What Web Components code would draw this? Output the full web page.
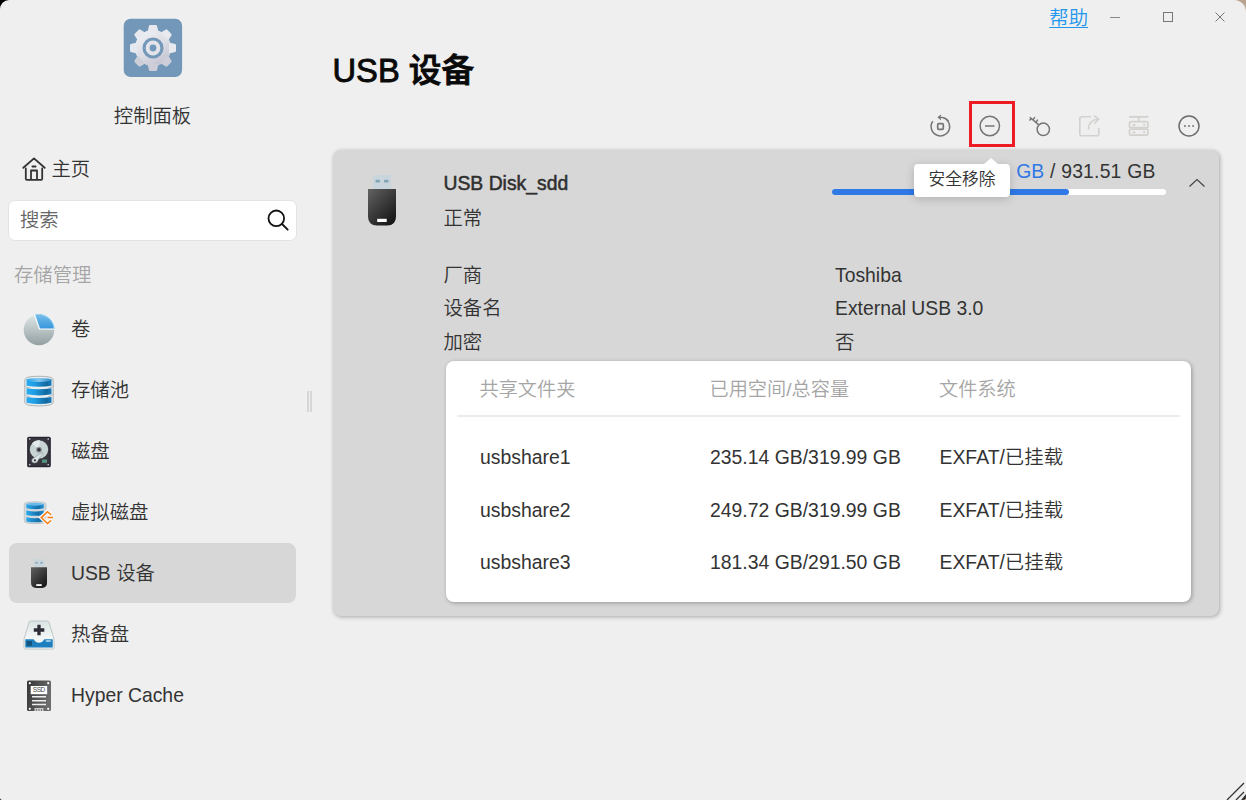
<!DOCTYPE html>
<html lang="zh-CN">
<head>
<meta charset="utf-8">
<title>控制面板</title>
<style>
    html, body {
        margin: 0;
        height: 100%;
        overflow: hidden;
    }
    body {
        background: linear-gradient(90deg, #000 50%, #b9a58f 50%);
        font: 350 19.35px/28px "Liberation Sans", "Noto Sans CJK SC", sans-serif;
        color: #333;
    }
</style>
</head>
<body>
<app-window>
    <side-bar slot="side">
        <nav-item icon="pie">卷</nav-item>
        <nav-item icon="pool">存储池</nav-item>
        <nav-item icon="disk">磁盘</nav-item>
        <nav-item icon="virtual">虚拟磁盘</nav-item>
        <nav-item icon="usb" active>USB 设备</nav-item>
        <nav-item icon="spare">热备盘</nav-item>
        <nav-item icon="ssd">Hyper Cache</nav-item>
    </side-bar>
    <tool-bar slot="tools">
        <tool-button icon="refresh"></tool-button>
        <tool-button icon="minus" marked>安全移除</tool-button>
        <tool-button icon="key"></tool-button>
        <tool-button icon="share"></tool-button>
        <tool-button icon="server"></tool-button>
        <tool-button icon="more"></tool-button>
    </tool-bar>
    <device-card>
        <span slot="name">USB Disk_sdd</span>
        <span slot="status">正常</span>
        <usage-bar slot="usage" percent="71.2"><span slot="used">GB</span> / 931.51 GB</usage-bar>
        <info-row label="厂商">Toshiba</info-row>
        <info-row label="设备名">External USB 3.0</info-row>
        <info-row label="加密">否</info-row>
        <share-table slot="shares"></share-table>
    </device-card>
</app-window>

<script>
const icons = {
    gear: `<svg width="60" height="60" viewBox="0 0 60 60">
        <defs><linearGradient id="g" x1="0" y1="0" x2=".6" y2="1"><stop offset="0" stop-color="#f4f5f8"/><stop offset=".6" stop-color="#dcdde5"/><stop offset="1" stop-color="#c5c6d3"/></linearGradient></defs>
        <rect x=".7" y=".7" width="58.4" height="58.4" rx="7" fill="#7297b8"/>
        <g fill="url(#g)"><circle cx="30" cy="30" r="18"/>
        ${[0, 45, 90, 135, 180, 225, 270, 315].map(a => `<path transform="rotate(${a} 30 30)" fill="${a > 90 && a < 270 ? '#cdced8' : '#e8e9ef'}" d="M24.5 14L26 7.8Q26.3 7 27.2 7h5.6q.9 0 1.2.8L35.500 14z"/>`).join('')}</g>
        <circle cx="30" cy="30" r="10.500" fill="#7297b8"/>
        <circle cx="30" cy="30" r="5.400" fill="none" stroke="#e3e4eb" stroke-width="4"/></svg>`,
    home: `<svg width="26" height="26" viewBox="0 0 26 26" fill="none" stroke="#333" stroke-width="1.8" stroke-linecap="round" stroke-linejoin="round">
        <path d="M2.300 11.800L13 2.400l10.700 9.400M4.800 12.500v10.300q0 1 1 1h14.400q1 0 1-1V12.500M10 23.500v-9h6v9M11.400 10.500h3.200"/></svg>`,
    search: `<svg width="22" height="22" viewBox="0 0 22 22" fill="none" stroke="#111" stroke-width="1.8" stroke-linecap="round">
        <circle cx="9.300" cy="9.300" r="7.800"/><path d="M15 15l5.700 5.700"/></svg>`,
    pie: `<svg width="32" height="32" viewBox="0 0 32 32">
        <defs><linearGradient id="a" x2="0" y2="1"><stop offset="0" stop-color="#dfe7e8"/><stop offset="1" stop-color="#939fa1"/></linearGradient>
        <linearGradient id="b" x2="0" y2="1"><stop offset="0" stop-color="#75bfea"/><stop offset="1" stop-color="#3795dc"/></linearGradient></defs>
        <circle cx="16" cy="16" r="15.300" fill="url(#a)"/>
        <path d="M16.500 15L11.600.9A15.300 15.300 0 0 1 31.400 15z" fill="url(#b)" stroke="#fff" stroke-width="1.200"/>
        <path d="M12 .9A15.200 15.200 0 0 1 31.300 15" fill="none" stroke="#75bde8" stroke-width=".8"/></svg>`,
    pool: `<svg width="32" height="32" viewBox="0 0 32 32">
        <defs><linearGradient id="c"><stop offset="0" stop-color="#2aa9ed"/><stop offset=".3" stop-color="#20a0e8"/><stop offset=".8" stop-color="#12689f"/><stop offset="1" stop-color="#1b7dbd"/></linearGradient>
        <linearGradient id="t"><stop offset="0" stop-color="#2aa2e8"/><stop offset=".5" stop-color="#82c8f0"/><stop offset="1" stop-color="#2c89c6"/></linearGradient></defs>
        <path d="M1.800 5C1.800 2 8 1.300 16 1.300S30.200 2 30.200 5v22c0 3-6 3.900-14.200 3.900S1.800 30 1.800 27z" fill="#e8eef0" stroke="#a6abad" stroke-width=".9"/>
        <g fill="url(#c)"><path d="M3.500 4.500h25v6.200q-12 2.300-25 0z"/><path d="M3.500 13.300q12 2 25 0v6q-12 2.300-25 0z"/><path d="M3.500 22q12 2 25 0v5.700q-12 2.600-25 0z"/></g>
        <ellipse cx="16" cy="4.900" rx="12.500" ry="2" fill="url(#t)"/>
        <path d="M1.800 10.800q1 2 5 2.200M30.200 10.800q-1 2-5 2.200M1.800 19.300q1 2 5 2.200M30.200 19.300q-1 2-5 2.200" fill="none" stroke="#a6abad" stroke-width=".8"/></svg>`,
    disk: `<svg width="32" height="32" viewBox="0 0 32 32">
        <rect x="4.200" y=".7" width="23.500" height="30.500" rx="1.500" fill="#37363f"/>
        <rect x="5" y="1.500" width="22" height="28.900" rx="1" fill="none" stroke="#24232b"/>
        <g fill="#dce2e4"><circle cx="6.700" cy="3" r=".8"/><circle cx="25.200" cy="3" r=".8"/><circle cx="6.700" cy="28.800" r=".8"/><circle cx="25.200" cy="28.800" r=".8"/></g>
        <circle cx="16" cy="13.500" r="9.200" fill="#c8d3d4"/><path d="M16 13.500L9 7.500a9.200 9.200 0 0 1 8-3.100z" fill="#e3eaea"/>
        <circle cx="16" cy="13.700" r="2.900" fill="#8b9698"/><circle cx="16" cy="13.700" r="1.800" fill="#333039"/>
        <path d="M9.800 22.500l6-4 4-1.800.6 1.400-3.700 3.400-2.700 4.700q-3.200 1.800-5-.5-.8-1.700.8-3.200z" fill="#d8e1e2" stroke="#849193" stroke-width=".5"/>
        <circle cx="11.900" cy="24.300" r="1.100" fill="#333039"/><rect x="19" y="23.500" width="5" height="3.300" fill="#569482"/></svg>`,
    virtual: `<svg width="32" height="32" viewBox="0 0 32 32">
        <defs><linearGradient id="c"><stop offset="0" stop-color="#2aa9ed"/><stop offset=".7" stop-color="#166fa9"/><stop offset="1" stop-color="#2791d3"/></linearGradient></defs>
        <path d="M1.300 7Q1.300 4.800 12 4.800T23 7v17q0 2.600-11 2.600T1.300 24z" fill="#d2d9dc" stroke="#b9c0c3" stroke-width=".8"/>
        <g fill="url(#c)"><path d="M3.300 7h17.500v4.300q-8.500 1.700-17.500 0z"/><path d="M3.300 13.600q8.500 1.700 17.500 0V18q-8.500 1.700-17.500 0z"/><path d="M3.300 20.300q8.500 1.700 17.500 0v4.200q-8.500 1.700-17.500 0z"/></g>
        <ellipse cx="12" cy="7.200" rx="8.700" ry="1.500" fill="#66b9e8"/>
        <path d="M28 17.800L24.500 14.800 18.300 20.600l6.200 5.900 3.500-3M23.500 20.600h6.500" fill="none" stroke="#f8f8f8" stroke-width="4"/>
        <path d="M28 17.800L24.500 14.800 18.300 20.600l6.200 5.900 3.500-3M24.500 20.600h5.500" fill="none" stroke="#f67d0c" stroke-width="1.500"/></svg>`,
    usb: `<svg viewBox="0 0 56 56">
        <defs><linearGradient id="u" x1="0" y1="0" x2=".8" y2="1"><stop offset="0" stop-color="#626262"/><stop offset="1" stop-color="#161616"/></linearGradient></defs>
        <rect x="19" y="2" width="18" height="14" fill="#c8d5dc"/>
        <rect x="21.500" y="6.800" width="4.500" height="2.800" rx="1" fill="#82a4b4"/><rect x="30" y="6.800" width="4.500" height="2.800" rx="1" fill="#82a4b4"/>
        <path d="M14 16h28v27.500q0 9-9 9H23q-9 0-9-9z" fill="url(#u)"/><rect x="23.200" y="45.800" width="9.500" height="3.200" fill="#fff"/></svg>`,
    spare: `<svg width="32" height="32" viewBox="0 0 32 32">
        <defs><linearGradient id="w" x2="0" y2="1"><stop offset="0" stop-color="#dbe4e4"/><stop offset=".6" stop-color="#f3f6f6"/></linearGradient></defs>
        <path d="M7.500 2h17q1 0 1.400 1L31 20v8.800q0 1.200-1.200 1.200H2.200Q1 30 1 28.800V20L6.100 3q.4-1 1.400-1z" fill="url(#w)" stroke="#b3bcbd" stroke-width=".8"/>
        <path d="M2.300 20.300h8.300q2.200 3.500 5.400 3.500t5.400-3.500h8.300v8.300H2.300z" fill="#1d7fbd"/>
        <rect x="3.500" y="22" width="5.500" height="4.800" fill="#14557f"/><path d="M22.800 22h5" stroke="#d4eafa" stroke-width="1.300"/>
        <path d="M10.800 11h10.500M16 5.800v10.500" stroke="#2e2d36" stroke-width="3.300"/></svg>`,
    ssd: `<svg width="32" height="32" viewBox="0 0 32 32">
        <defs><linearGradient id="s" x1="0" x2="1" y1="0" y2=".3"><stop offset="0" stop-color="#353535"/><stop offset="1" stop-color="#6c6c6c"/></linearGradient></defs>
        <rect x="4" y=".5" width="24" height="30.500" rx="1.500" fill="url(#s)"/>
        <g fill="#fff"><circle cx="6.800" cy="3.200" r="1.100"/><circle cx="25.200" cy="3.200" r="1.100"/><circle cx="6.800" cy="28.800" r="1.100"/><circle cx="25.200" cy="28.800" r="1.100"/><rect x="7.700" y="6" width="16.500" height="8.200"/></g>
        <text x="16" y="12.400" text-anchor="middle" textLength="12.500" font-family="Liberation Sans" font-size="6.500" font-weight="400" fill="#444">SSD</text>
        <path d="M9 16.800h14M9 20.700h14M9 24.600h14" stroke="#eee" stroke-width="1.500"/><path d="M11.500 28h9v3h-9z" fill="#c9c9c9"/><path d="M13.500 29v2M16 29v2M18.500 29v2" stroke="#666" stroke-width=".8"/></svg>`,
    refresh: `<svg width="24" height="24" viewBox="0 0 24 24" fill="none" stroke="#757575" stroke-width="1.500">
        <path d="M3.800 7.200A9.300 9.300 0 1 0 9.800 3.400" stroke-dasharray="46.500 100"/><path d="M9.600 3.300h2.200a9.300 9.300 0 0 1 7.700 3.700M12 1.200L9.400 3.300 12 5.500" stroke-width="1.300"/>
        <rect x="8.700" y="9.700" width="5.600" height="5.600" rx="1" stroke-width="1.700"/></svg>`,
    minus: `<svg width="24" height="24" viewBox="0 0 24 24" fill="none" stroke="#757575" stroke-width="1.500"><circle cx="11.800" cy="12" r="9.700"/><path d="M7 12h9.600"/></svg>`,
    key: `<svg width="24" height="24" viewBox="0 0 24 24" fill="none" stroke="#757575" stroke-width="1.500">
        <circle cx="15.300" cy="15.300" r="6.200"/><path d="M10.800 10.900L1.800 3.300M7.800 8.200l2-2.600M4.900 5.900l2.100-2.800M1.500 6.500l2-2.300"/></svg>`,
    share: `<svg width="24" height="24" viewBox="0 0 24 24" fill="none" stroke="#d3d1ce" stroke-width="1.600">
        <path d="M13 2.700H3.800q-2 0-2 2v15q0 2 2 2h15q2 0 2-2V14M10.500 15.500Q10.500 6 20 5.200M16 1.700l4.500 3.500-4.200 4.500"/></svg>`,
    server: `<svg width="24" height="24" viewBox="0 0 24 24" fill="none" stroke="#d3d1ce" stroke-width="1.700">
        <path d="M2 2.800h19.500M11.700 2.800v5M5.500 11.200h3M5.500 18.300h3"/><rect x="2.400" y="7.700" width="18.600" height="6" rx="1.500"/><rect x="2.400" y="15.200" width="18.600" height="6" rx="1.500"/><path d="M16.300 10.800h1.800M16.300 18.200h1.800" stroke-width="2"/></svg>`,
    more: `<svg width="24" height="24" viewBox="0 0 24 24" fill="none" stroke="#6c6c6c" stroke-width="1.500"><circle cx="12" cy="12" r="10"/><path d="M7 12h1.800M11.100 12h1.800M15.200 12H17" stroke-width="1.700"/></svg>`,
    chevron: `<svg width="18" height="10" viewBox="0 0 18 10" fill="none" stroke="#444" stroke-width="1.200"><path d="M1.500 8.500L9 1.500l7.500 7"/></svg>`
};

// Shared base: renders the class template into an open shadow root
class BaseElement extends HTMLElement {
    connectedCallback() {
        if (this.shadowRoot) return;
        const template = document.createElement('template');
        template.innerHTML = this.render();
        this.attachShadow({ mode: 'open' }).appendChild(template.content.cloneNode(true));
    }
}

class AppWindow extends BaseElement {
    render() {
        return `
            <style>
                :host {
                    display: flex;
                    position: relative;
                    height: 100vh;
                    box-sizing: border-box;
                    background: #efefef;
                    border-radius: 9px 12px 4px 2px;
                    overflow: hidden;
                }
                .splitter {
                    align-self: center;
                    width: 1px;
                    height: 21px;
                    margin: 2px 20.500px 0 2px;
                    border: solid #d6d6d6;
                    border-width: 0 2px;
                }
                main { flex: 1; display: flex; flex-direction: column; }
                .title-bar {
                    display: flex;
                    justify-content: flex-end;
                    align-items: center;
                    height: 33px;
                    padding-right: 20px;
                }
                .title-bar a { color: #2196ee; margin: 2px 21px 0 0; text-decoration: underline; text-underline-offset: 2px; text-decoration-thickness: 1px; }
                .title-bar svg { display: block; margin-left: 40.500px; }
                .title-bar a + svg { margin-left: 0; }
                h1 {
                    margin: 14px 0 0;
                    font-size: 32.700px;
                    line-height: 48px;
                    font-weight: 500;
                    color: #0a0a0a;
                    -webkit-text-stroke: .9px #0a0a0a;
                }
                .grip { position: absolute; right: 0; bottom: 0; }
            </style>
            <slot name="side"></slot>
            <div class="splitter"></div>
            <main>
                <div class="title-bar">
                    <a>帮助</a>
                    <svg width="12" height="12" stroke="#888"><path d="M1 6.500h10"/></svg>
                    <svg width="12" height="12" fill="none" stroke="#777"><rect x="1.500" y="1.500" width="9" height="9"/></svg>
                    <svg width="12" height="12" stroke="#777"><path d="M1.500 1.500l9 9M10.500 1.500l-9 9"/></svg>
                </div>
                <h1>USB 设备</h1>
                <slot name="tools"></slot>
                <slot></slot>
            </main>
            <svg class="grip" width="20" height="18" stroke="#333" stroke-width="1.300"><path d="M1 18L18 1M10 18l8-8"/><path d="M16 18l4-5v5z" fill="#111"/></svg>
        `;
    }
}

class SideBar extends BaseElement {
    render() {
        return `
            <style>
                :host { display: flex; flex-direction: column; width: 305px; padding-top: 17.500px; box-sizing: border-box; }
                svg { display: block; flex: none; }
                .brand { display: flex; flex-direction: column; align-items: center; gap: 24px; }
                .home { display: flex; align-items: center; gap: 5px; margin: 25px 0 0 20.500px; }
                .search {
                    display: flex;
                    align-items: center;
                    justify-content: space-between;
                    height: 39px;
                    margin: 17px 8px 0;
                    padding: 0 7px 0 11px;
                    background: #fff;
                    border: 1px solid #e3e3e3;
                    border-radius: 7px;
                    color: #666;
                }
                .group { margin: 20px 0 10px 14px; color: #a5a5a5; }
                nav { display: flex; flex-direction: column; gap: 1px; }
            </style>
            <div class="brand">${icons.gear}<div>控制面板</div></div>
            <div class="home">${icons.home}<span>主页</span></div>
            <div class="search"><span>搜索</span>${icons.search}</div>
            <div class="group">存储管理</div>
            <nav><slot></slot></nav>
        `;
    }
}

class NavItem extends BaseElement {
    render() {
        return `
            <style>
                :host {
                    display: flex;
                    align-items: center;
                    gap: 16px;
                    height: 60px;
                    box-sizing: border-box;
                    margin: 0 9px;
                    padding: 1px 0 0 14px;
                    border-radius: 8px;
                }
                :host([active]) { background: #d7d7d7; }
                svg { display: block; width: 32px; height: 32px; margin-top: 1px; }
            </style>
            ${icons[this.getAttribute('icon')]}<span><slot></slot></span>
        `;
    }
}

class ToolBar extends BaseElement {
    render() {
        return `
            <style>
                :host { display: flex; justify-content: flex-end; gap: 3.700px; padding: 8px 34px 1px 0; }
            </style>
            <slot></slot>
        `;
    }
}

class ToolButton extends BaseElement {
    render() {
        const tip = this.textContent.trim() ? '<div class="tip"><slot></slot></div>' : '';
        return `
            <style>
                :host {
                    display: grid;
                    place-items: center;
                    position: relative;
                    width: 46px;
                    height: 46px;
                }
                :host([marked])::after {
                    content: "";
                    position: absolute;
                    inset: -2px -2px 2px 2px;
                    border: 3px solid #ed1c24;
                }
                svg { display: block; }
                .tip {
                    position: absolute;
                    z-index: 2;
                    top: 61px;
                    right: 3.300px;
                    width: 96px;
                    height: 33px;
                    border-radius: 4px;
                    background: #fff;
                    box-shadow: 0 2px 10px rgba(0, 0, 0, .18);
                    font-size: 16.700px;
                    line-height: 32px;
                    text-align: center;
                    white-space: nowrap;
                }
                .tip::before {
                    content: "";
                    position: absolute;
                    top: -6px;
                    right: 12px;
                    border: solid transparent;
                    border-width: 0 7px 6px;
                    border-bottom-color: #fff;
                }
            </style>
            ${icons[this.getAttribute('icon')]}${tip}
        `;
    }
}

class DeviceCard extends BaseElement {
    render() {
        return `
            <style>
                :host {
                    display: block;
                    width: 886px;
                    height: 466px;
                    box-sizing: border-box;
                    padding: 19px 28px 14px 21px;
                    border-radius: 8px;
                    background: #d7d7d7;
                    box-shadow: 1px 1px 4px rgba(0, 0, 0, .3);
                }
                header { display: flex; height: 90px; margin-right: -28px; }
                svg { display: block; }
                .device { width: 56px; margin: 4px 34px 0 0; }
                .names { flex: 1; }
                .name { color: #2f2f2f; -webkit-text-stroke: .5px #2f2f2f; }
                .status { margin-top: 7px; }
                .chevron { margin: 9px 13px 0 22px; }
                .body { padding-left: 90px; }
                .shares { margin: 2px 0 0 92px; }
            </style>
            <header>
                <div class="device">${icons.usb}</div>
                <div class="names">
                    <div class="name"><slot name="name"></slot></div>
                    <div class="status"><slot name="status"></slot></div>
                </div>
                <slot name="usage"></slot>
                <div class="chevron">${icons.chevron}</div>
            </header>
            <div class="body"><slot></slot></div>
            <div class="shares"><slot name="shares"></slot></div>
        `;
    }
}

class UsageBar extends BaseElement {
    render() {
        return `
            <style>
                :host { display: block; width: 334px; margin-top: -12px; }
                .text { text-align: right; padding-right: 10px; letter-spacing: .2px; }
                .text span { color: #2f78e6; }
                .track { height: 6px; margin-top: 4px; border-radius: 3px; background: #fff; }
                .fill { height: 100%; width: ${this.getAttribute('percent')}%; border-radius: 3px; background: #2f78e6; }
            </style>
            <div class="text"><span><slot name="used"></slot></span><slot></slot></div>
            <div class="track"><div class="fill"></div></div>
        `;
    }
}

class InfoRow extends BaseElement {
    render() {
        return `
            <style>
                :host { display: grid; grid-template-columns: 391.500px 1fr; line-height: 33.300px; }
            </style>
            <span>${this.getAttribute('label')}</span><span><slot></slot></span>
        `;
    }
}

class ShareTable extends BaseElement {
    render() {
        const rows = [
            ['usbshare1', '235.14 GB/319.99 GB', 'EXFAT/已挂载'],
            ['usbshare2', '249.72 GB/319.99 GB', 'EXFAT/已挂载'],
            ['usbshare3', '181.34 GB/291.50 GB', 'EXFAT/已挂载']
        ];
        return `
            <style>
                :host {
                    display: block;
                    height: 241px;
                    box-sizing: border-box;
                    padding: 0 11px;
                    border-radius: 8px;
                    background: #fff;
                    box-shadow: 1px 1px 4px rgba(0, 0, 0, .3);
                }
                .row {
                    display: grid;
                    grid-template-columns: 230px 229.500px 1fr;
                    padding-left: 23.500px;
                    line-height: 52.700px;
                    font-size: 19.400px;
                }
                .head {
                    padding: 4px 0 0 23px;
                    line-height: 50px;
                    margin-bottom: 14px;
                    border-bottom: 2px solid #ebebeb;
                    color: #a5a5a5;
                    font-size: 19.200px;
                }
            </style>
            <div class="row head"><span>共享文件夹</span><span>已用空间/总容量</span><span>文件系统</span></div>
            ${rows.map(row => `<div class="row">${row.map(cell => `<span>${cell}</span>`).join('')}</div>`).join('')}
        `;
    }
}

customElements.define('app-window', AppWindow);
customElements.define('side-bar', SideBar);
customElements.define('nav-item', NavItem);
customElements.define('tool-bar', ToolBar);
customElements.define('tool-button', ToolButton);
customElements.define('device-card', DeviceCard);
customElements.define('usage-bar', UsageBar);
customElements.define('info-row', InfoRow);
customElements.define('share-table', ShareTable);
</script>
</body>
</html>
